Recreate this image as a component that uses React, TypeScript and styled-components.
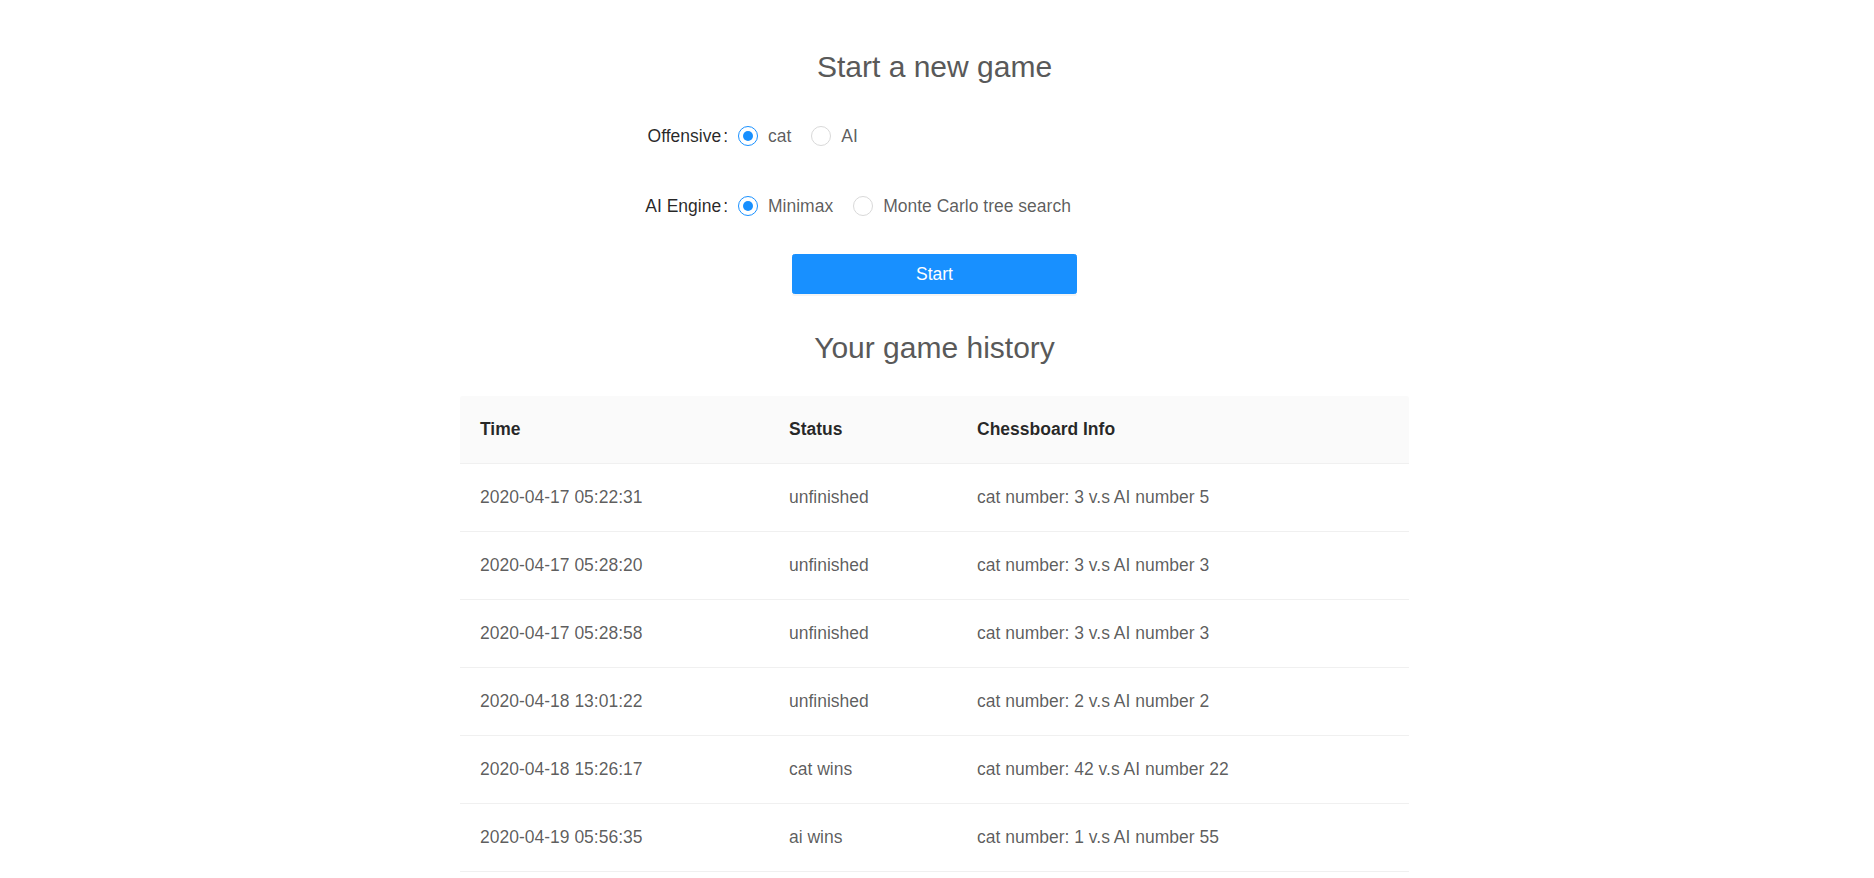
import React from "react";
import styled, { createGlobalStyle } from "styled-components";

const GlobalStyle = createGlobalStyle`
  html, body {
    margin: 0;
    padding: 0;
    background: #fff;
  }
  body {
    font-family: "Segoe UI", "Liberation Sans", Arial, sans-serif;
    font-size: 17.5px;
    color: rgba(0, 0, 0, 0.65);
  }
`;

const Page = styled.div`
  padding-right: 5px;
  display: flex;
  flex-direction: column;
  align-items: center;
`;

const Content = styled.div`
  width: 949px;
  display: flex;
  flex-direction: column;
  align-items: center;
`;

const Title = styled.h3<{ $top: number }>`
  margin: ${p => p.$top}px 0 0;
  font-size: 30px;
  line-height: 40px;
  font-weight: 400;
  color: #595959;
  text-align: center;
`;

const Form = styled.div`
  width: 100%;
  margin-top: 29px;
  display: flex;
  flex-direction: column;
  gap: 30px;
`;

const FormRow = styled.div`
  display: grid;
  grid-template-columns: 278px 1fr;
  height: 40px;
  align-items: center;
`;

const Label = styled.label`
  text-align: right;
  color: rgba(0, 0, 0, 0.85);
  white-space: nowrap;

  &::after {
    content: ":";
    margin: 0 10px 0 2px;
  }
`;

const RadioGroup = styled.div`
  display: flex;
  align-items: center;
`;

const RadioItem = styled.label`
  display: inline-flex;
  align-items: center;
  margin-right: 10px;
  cursor: pointer;
  color: rgba(0, 0, 0, 0.65);
`;

const RadioCircle = styled.span<{ $checked: boolean }>`
  position: relative;
  box-sizing: border-box;
  width: 20px;
  height: 20px;
  border-radius: 50%;
  border: 1px solid ${p => (p.$checked ? "#1890ff" : "#d9d9d9")};
  background: #fff;
  flex: none;

  &::after {
    content: "";
    display: ${p => (p.$checked ? "block" : "none")};
    position: absolute;
    left: 4px;
    top: 4px;
    width: 10px;
    height: 10px;
    border-radius: 50%;
    background: #1890ff;
  }
`;

const RadioText = styled.span`
  padding: 0 10px;
  line-height: 24px;
`;

const StartButton = styled.button`
  margin-top: 28px;
  width: 285px;
  height: 40px;
  border: 1px solid #1890ff;
  border-radius: 2.5px;
  background: #1890ff;
  color: #fff;
  font-family: inherit;
  font-size: 17.5px;
  box-shadow: 0 2px 0 rgba(0, 0, 0, 0.045);
  cursor: pointer;
`;

const Table = styled.table`
  margin-top: 28px;
  width: 949px;
  border-collapse: separate;
  border-spacing: 0;
  table-layout: fixed;
`;

const HeadCell = styled.th`
  height: 67px;
  padding: 0 20px;
  text-align: left;
  background: #fafafa;
  color: rgba(0, 0, 0, 0.85);
  font-weight: 600;
  border-bottom: 1px solid #f0f0f0;

  &:first-child {
    border-top-left-radius: 2.5px;
  }
  &:last-child {
    border-top-right-radius: 2.5px;
  }
`;

const Cell = styled.td`
  height: 67px;
  padding: 0 20px;
  color: rgba(0, 0, 0, 0.65);
  border-bottom: 1px solid #f0f0f0;
  white-space: nowrap;
`;

type RadioProps = { label: string; checked: boolean; onSelect: () => void };

function Radio({ label, checked, onSelect }: RadioProps) {
  return (
    <RadioItem onClick={onSelect}>
      <RadioCircle $checked={checked} />
      <RadioText>{label}</RadioText>
    </RadioItem>
  );
}

const history = [
  { time: "2020-04-17 05:22:31", status: "unfinished", info: "cat number: 3 v.s AI number 5" },
  { time: "2020-04-17 05:28:20", status: "unfinished", info: "cat number: 3 v.s AI number 3" },
  { time: "2020-04-17 05:28:58", status: "unfinished", info: "cat number: 3 v.s AI number 3" },
  { time: "2020-04-18 13:01:22", status: "unfinished", info: "cat number: 2 v.s AI number 2" },
  { time: "2020-04-18 15:26:17", status: "cat wins", info: "cat number: 42 v.s AI number 22" },
  { time: "2020-04-19 05:56:35", status: "ai wins", info: "cat number: 1 v.s AI number 55" },
];

export default function App() {
  const [offensive, setOffensive] = React.useState("cat");
  const [engine, setEngine] = React.useState("minimax");

  return (
    <Page>
      <GlobalStyle />
      <Content>
        <Title $top={47}>Start a new game</Title>
        <Form>
          <FormRow>
            <Label>Offensive</Label>
            <RadioGroup>
              <Radio label="cat" checked={offensive === "cat"} onSelect={() => setOffensive("cat")} />
              <Radio label="AI" checked={offensive === "ai"} onSelect={() => setOffensive("ai")} />
            </RadioGroup>
          </FormRow>
          <FormRow>
            <Label>AI Engine</Label>
            <RadioGroup>
              <Radio label="Minimax" checked={engine === "minimax"} onSelect={() => setEngine("minimax")} />
              <Radio label="Monte Carlo tree search" checked={engine === "mcts"} onSelect={() => setEngine("mcts")} />
            </RadioGroup>
          </FormRow>
        </Form>
        <StartButton>Start</StartButton>
        <Title $top={34}>Your game history</Title>
        <Table>
          <colgroup>
            <col style={{ width: 309 }} />
            <col style={{ width: 188 }} />
            <col style={{ width: 452 }} />
          </colgroup>
          <thead>
            <tr>
              <HeadCell>Time</HeadCell>
              <HeadCell>Status</HeadCell>
              <HeadCell>Chessboard Info</HeadCell>
            </tr>
          </thead>
          <tbody>
            {history.map(row => (
              <tr key={row.time}>
                <Cell>{row.time}</Cell>
                <Cell>{row.status}</Cell>
                <Cell>{row.info}</Cell>
              </tr>
            ))}
          </tbody>
        </Table>
      </Content>
    </Page>
  );
}
